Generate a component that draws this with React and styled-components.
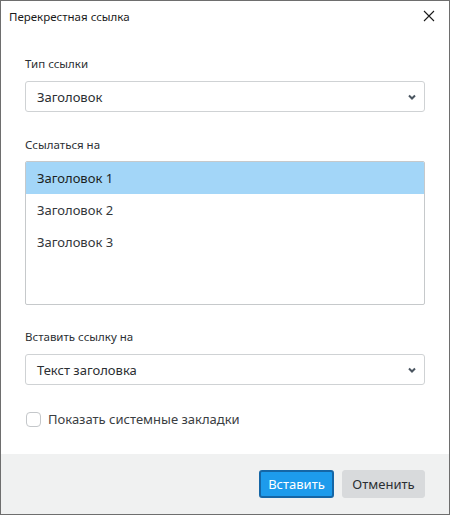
import React from "react";
import styled, { createGlobalStyle } from "styled-components";

const GlobalStyle = createGlobalStyle`
  html, body { margin: 0; padding: 0; background: #ffffff; }
  body { font-family: "Noto Sans", "Open Sans", sans-serif; color: #2b2f33; }
  * { box-sizing: border-box; }
`;

const Window = styled.div`
  width: 450px;
  height: 515px;
  border: 1px solid #6e6e6e;
  display: flex;
  flex-direction: column;
  background: #ffffff;
`;

const TitleBar = styled.div`
  height: 32px;
  display: flex;
  align-items: center;
  justify-content: space-between;
  padding: 0 8px 2px 8px;
  font-size: 11.5px;
  color: #1a1a1a;
`;

const CloseButton = styled.button`
  width: 24px;
  height: 24px;
  border: none;
  background: transparent;
  padding: 0;
  display: flex;
  align-items: center;
  justify-content: center;
  color: #1a1a1a;
`;

const Body = styled.div`
  flex: 1;
  padding: 23px 24px 0 24px;
  display: flex;
  flex-direction: column;
`;

const Label = styled.div`
  font-size: 11.5px;
  line-height: 16px;
  color: #2b2f33;
  margin-bottom: ${(p) => p.$gap || 9}px;
`;

const Select = styled.div`
  height: 31px;
  flex: 0 0 auto;
  border: 1px solid #cfd2d4;
  border-radius: 3px;
  display: flex;
  align-items: center;
  justify-content: space-between;
  padding: 0 7px 0 11px;
  font-size: 13px;
  color: #2b2f33;
  margin-bottom: ${(p) => p.$mb || 0}px;
`;

const List = styled.div`
  height: 144px;
  flex: 0 0 auto;
  border: 1px solid #c6c9cb;
  border-radius: 2px;
  display: flex;
  flex-direction: column;
  margin-bottom: 24px;
  overflow: hidden;
`;

const Item = styled.div`
  height: 32px;
  flex: 0 0 auto;
  display: flex;
  align-items: center;
  padding-left: 11px;
  font-size: 13px;
  color: ${(p) => (p.$selected ? "#1c1f22" : "#33373b")};
  background: ${(p) => (p.$selected ? "#a3d6f8" : "transparent")};
`;

const CheckRow = styled.label`
  display: flex;
  align-items: center;
  gap: 7px;
  font-size: 13px;
  line-height: 19px;
  color: #3a3e42;
  margin-top: 25px;
`;

const Box = styled.span`
  width: 15px;
  height: 15px;
  border: 1px solid #c4c7ca;
  border-radius: 4px;
  background: #fff;
  margin-left: 1px;
`;

const Footer = styled.div`
  height: 60px;
  flex: 0 0 auto;
  background: #f0f1f1;
  display: flex;
  justify-content: flex-end;
  align-items: flex-start;
  gap: 8px;
  padding: 16px 24px 0 0;
`;

const Button = styled.button`
  height: 28px;
  width: ${(p) => (p.$primary ? 75 : 83)}px;
  padding: 0;
  font-family: "Noto Sans", "Open Sans", sans-serif;
  font-size: 13px;
  border-radius: 3px;
  border: ${(p) => (p.$primary ? "2px solid #1566a6" : "1px solid #d8dadc")};
  background: ${(p) => (p.$primary ? "#1d9bec" : "#d8dadc")};
  color: ${(p) => (p.$primary ? "#ffffff" : "#2b2f33")};
`;

const Chevron = () => (
  <svg width="10" height="8" viewBox="0 0 10 8">
    <path d="M2 2.5 L5 5.5 L8 2.5" fill="none" stroke="#4a5560" strokeWidth="2" />
  </svg>
);

export default function App() {
  return (
    <>
      <GlobalStyle />
      <Window>
        <TitleBar>
          <span>Перекрестная ссылка</span>
          <CloseButton aria-label="close">
            <svg width="12" height="12" viewBox="0 0 12 12">
              <path d="M1 1 L11 11 M11 1 L1 11" stroke="#1a1a1a" strokeWidth="1.1" />
            </svg>
          </CloseButton>
        </TitleBar>
        <Body>
          <Label>Тип ссылки</Label>
          <Select $mb={25}>
            <span>Заголовок</span>
            <Chevron />
          </Select>
          <Label $gap={8}>Ссылаться на</Label>
          <List>
            <Item $selected>Заголовок 1</Item>
            <Item>Заголовок 2</Item>
            <Item>Заголовок 3</Item>
          </List>
          <Label>Вставить ссылку на</Label>
          <Select>
            <span>Текст заголовка</span>
            <Chevron />
          </Select>
          <CheckRow>
            <Box />
            Показать системные закладки
          </CheckRow>
        </Body>
        <Footer>
          <Button $primary>Вставить</Button>
          <Button>Отменить</Button>
        </Footer>
      </Window>
    </>
  );
}
